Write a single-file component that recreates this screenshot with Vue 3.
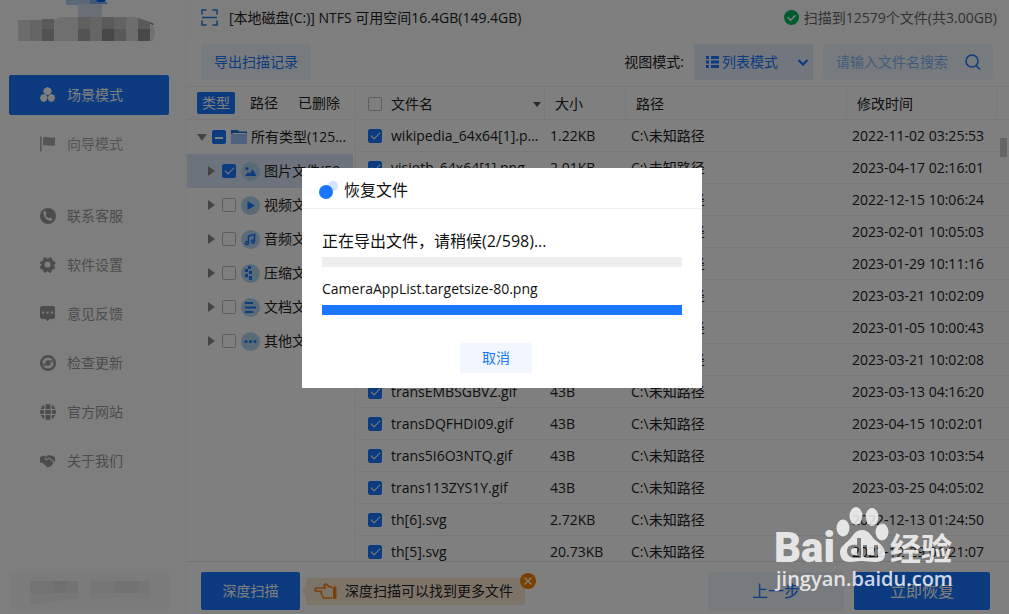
<script setup>
import { ref } from 'vue'

const primaryNav = [
  { label: '场景模式', icon: 'scene', active: true },
  { label: '向导模式', icon: 'flag' },
]
const secondaryNav = [
  { label: '联系客服', icon: 'phone' },
  { label: '软件设置', icon: 'gear' },
  { label: '意见反馈', icon: 'chat' },
  { label: '检查更新', icon: 'update' },
  { label: '官方网站', icon: 'globe' },
  { label: '关于我们', icon: 'hands' },
]
const tabs = ['类型', '路径', '已删除']
const tree = ref([
  { label: '图片文件(59...', icon: 'image', checked: true },
  { label: '视频文件', icon: 'video', checked: false },
  { label: '音频文件', icon: 'audio', checked: false },
  { label: '压缩文件', icon: 'zip', checked: false },
  { label: '文档文件', icon: 'doc', checked: false },
  { label: '其他文件', icon: 'other', checked: false },
])
const files = ref([
  { name: 'wikipedia_64x64[1].p...', size: '1.22KB', time: '2022-11-02 03:25:53' },
  { name: 'visioth_64x64[1].png', size: '2.01KB', time: '2023-04-17 02:16:01' },
  { name: '', size: '', time: '2022-12-15 10:06:24' },
  { name: '', size: '', time: '2023-02-01 10:05:03' },
  { name: '', size: '', time: '2023-01-29 10:11:16' },
  { name: '', size: '', time: '2023-03-21 10:02:09' },
  { name: '', size: '', time: '2023-01-05 10:00:43' },
  { name: '', size: '', time: '2023-03-21 10:02:08' },
  { name: 'transEMBSGBVZ.gif', size: '43B', time: '2023-03-13 04:16:20' },
  { name: 'transDQFHDI09.gif', size: '43B', time: '2023-04-15 10:02:01' },
  { name: 'trans5I6O3NTQ.gif', size: '43B', time: '2023-03-03 10:03:54' },
  { name: 'trans113ZYS1Y.gif', size: '43B', time: '2023-03-25 04:05:02' },
  { name: 'th[6].svg', size: '2.72KB', time: '2022-12-13 01:24:50' },
  { name: 'th[5].svg', size: '20.73KB', time: '2022-12-29 01:21:07' },
].map((f) => ({ ...f, checked: true })))
const allTypes = ref(true)
const allFiles = ref(false)
const keyword = ref('')
const viewMode = ref('list')
</script>

<template>
  <div class="app">
    <aside class="sidebar">
      <svg class="logo" width="160" height="44" viewBox="0 0 160 44" aria-hidden="true">
        <rect x="57" y="0" width="24" height="5" fill="#b9cfee" />
        <path d="M81 0h14l4 4H81z" fill="#80b0f0" />
        <path d="M87 0h10l-2 2h-6z" fill="#0863ea" />
        <rect x="69" y="4" width="24" height="13" fill="#d4ddee" />
        <rect x="9" y="20" width="24" height="21" fill="#d8d8d8" />
        <rect x="21" y="20" width="12" height="21" fill="#cacaca" />
        <rect x="33" y="19" width="12" height="22" fill="#b4b4b4" />
        <path d="M45 20l6-3h18v24H45z" fill="#dedede" />
        <rect x="69" y="17" width="12" height="24" fill="#c0c0c0" />
        <rect x="81" y="17" width="12" height="24" fill="#cacaca" />
        <rect x="93" y="17" width="12" height="24" fill="#b4b4b4" />
        <rect x="105" y="17" width="12" height="24" fill="#c6c6c6" />
        <path d="M117 17h9l3 1v23h-12z" fill="#dadada" />
        <path d="M129 18l12 4v19h-12z" fill="#b4b4b4" />
        <path d="M141 23q6 5 5 12l-2 6h-3z" fill="#e2e2e2" />
        <rect x="33" y="29" width="12" height="12" fill="#a4a4a4" />
        <rect x="69" y="29" width="12" height="12" fill="#a6a6a6" />
        <rect x="93" y="29" width="12" height="12" fill="#8e8e8e" />
        <rect x="105" y="29" width="12" height="12" fill="#b2b2b2" />
        <rect x="129" y="29" width="12" height="12" fill="#909090" />
        <path d="M141 22l4 2-1 1-3-2z" fill="#666" />
      </svg>
      <nav class="nav">
        <template v-for="(group, g) in [primaryNav, secondaryNav]" :key="g">
          <div class="nav-group">
            <a v-for="item in group" :key="item.label" href="#" class="nav-item" :class="{ active: item.active, strong: g === 1 }">
              <svg width="16" height="16" viewBox="0 0 16 16" fill="currentColor" aria-hidden="true">
                <g v-if="item.icon === 'scene'">
                  <path d="M7.5 0l3.300 1.400 1 3-1.500 2.900-2.800.8-2.800-.8-1.500-2.900 1-3zM3.700 7l3 1.300.9 2.800-1.500 3-2.400.9-2.500-1L0 11l1-2.800zM11.300 7l3 1.300.9 2.800-1.500 3-2.400.9-2.500-1-1.100-3 1-2.800z" />
                </g>
                <g v-else-if="item.icon === 'flag'">
                  <rect width="1.600" height="15" y="0.500" />
                  <path d="M3 1.500c4-1.500 6 1.200 12-.3v8c-5 2-8-1-12 .4z" />
                </g>
                <path v-else-if="item.icon === 'phone'" fill-rule="evenodd" d="M8 0a8 8 0 1 0 0 16A8 8 0 0 0 8 0zM4.400 3l1.300.5.8 2-1 1.200c.6 1.700 1.800 2.900 3.400 3.600l1.300-.9 1.900 1 .3 1.300c-.6 1-1.900 1.200-3.200.8C6 11.400 4 9 3.500 5.500c-.1-1.200.2-2 .9-2.500z" />
                <path v-else-if="item.icon === 'gear'" fill-rule="evenodd" d="M3.500.8L5.600.2l1.600 1.500h1L9.800.2l2.200.8.500 2.300.7.800 2 .7.200 2-1.400 1.100v1l1.300 1.200-.8 2-2 .5-.7.8-.5 2-1.700.5-1.500-1.300H7l-1.500 1.200-1.800-.5-.6-2-.8-.7-1.800-.6L0 9.800l1.300-1.400v-1L0 6.200l.5-1.700L2.600 4l.6-.7zM7.500 4.600a3 3 0 1 0 .1 6 3 3 0 0 0-.1-6z" />
                <path v-else-if="item.icon === 'chat'" fill-rule="evenodd" d="M1.500 0h12L15 1.500v10L13.500 13H9.600l-2.100 2.300L5.400 13H1.500L0 11.500v-10zM3 5.500h-1v2h2v-2zm3.500 0v2h2v-2zm4.500 0v2h2v-2z" />
                <g v-else-if="item.icon === 'update'" fill="none" stroke="currentColor">
                  <circle cx="8" cy="8" r="6.800" stroke-width="2.400" />
                  <circle cx="8" cy="8" r="2.700" fill="currentColor" stroke="none" />
                  <path d="M10.500 5l2.500 2.500M5.500 11L3 8.500" stroke-width="1.400" />
                </g>
                <g v-else-if="item.icon === 'globe'">
                  <circle cx="8" cy="8" r="8" />
                  <path d="M0 5.500h16M0 10.500h16M5.500 0Q3.500 8 5.500 16M10.500 0Q12.500 8 10.500 16" fill="none" class="cut" stroke-width="1.200" />
                </g>
                <g v-else>
                  <path d="M0 4l3.500-1.500L6 3.500 4.500 6l1.300 1.500L9 5.500l4.500 4.200-1.200 2-1 1.300-2 .8-1.500.6L3 10.300 0 9.500zM6.700 2.800L9.500 2l3 1L15 4v5.500L9.300 4.600 6 6.300 5.600 5.500z" />
                </g>
              </svg>
              <span>{{ item.label }}</span>
            </a>
          </div>
        </template>
      </nav>
      <div class="account">
        <svg width="130" height="25" viewBox="0 0 130 25" aria-hidden="true">
          <path d="M0 0h48v12H0z" fill="#e6e6e6" />
          <path d="M24 0h12v12H24z" fill="#dedede" />
          <path d="M0 12h48v5L12 23H0z" fill="#efefef" />
          <path d="M60 0h60v12H60z" fill="#ececec" />
          <path d="M84 0h24v12H84z" fill="#e4e4e4" />
          <path d="M60 12h60v5H60z" fill="#f2f2f2" />
        </svg>
      </div>
    </aside>

    <main class="main">
      <header class="top">
        <svg width="17" height="17" viewBox="0 0 17 17" fill="none" stroke="#2b7de9" stroke-width="1.500" aria-hidden="true">
          <path d="M1 5.500V1h4.500M11.500 1H16v4.500M16 11.500V16h-4.500M5.500 16H1v-4.500M1 8.500h15" />
        </svg>
        <span class="disk">[本地磁盘(C:)] NTFS 可用空间16.4GB(149.4GB)</span>
        <svg width="15" height="15" viewBox="0 0 15 15" aria-hidden="true">
          <circle cx="7.500" cy="7.500" r="7.500" fill="#00b85c" />
          <path d="M3.800 7.500l2.800 2.800 5-5" fill="none" stroke="#fff" stroke-width="1.500" />
        </svg>
        <span class="result">扫描到12579个文件(共3.00GB)</span>
      </header>

      <div class="toolbar">
        <button class="export" type="button">导出扫描记录</button>
        <label class="mode-label" for="mode">视图模式:</label>
        <div class="mode">
          <svg width="13" height="12" viewBox="0 0 13 12" fill="#1a76ff" aria-hidden="true">
            <path d="M0 0h3v3H0zM5 0h8v3H5zM0 4.500h3v3H0zM5 4.500h8v3H5zM0 9h3v3H0zM5 9h8v3H5z" />
          </svg>
          <select id="mode" v-model="viewMode">
            <option value="list">列表模式</option>
          </select>
          <svg width="10" height="7" viewBox="0 0 10 7" fill="none" stroke="#1a76ff" stroke-width="2" aria-hidden="true">
            <path d="M.5 1L5 5.500 9.500 1" />
          </svg>
        </div>
        <div class="search">
          <input v-model="keyword" type="text" placeholder="请输入文件名搜索" aria-label="请输入文件名搜索" />
          <button type="button" aria-label="搜索">
            <svg width="16" height="17" viewBox="0 0 16 17" fill="none" stroke="#1a76ff" stroke-width="1.600" aria-hidden="true">
              <circle cx="7" cy="7" r="6" />
              <path d="M11 11.500l4 4" />
            </svg>
          </button>
        </div>
      </div>

      <div class="content">
        <section class="types">
          <div class="tabs">
            <button v-for="(t, i) in tabs" :key="t" type="button" :class="{ on: i === 0 }">{{ t }}</button>
          </div>
          <div class="tree-row root">
            <svg width="10" height="7" viewBox="0 0 10 7" aria-hidden="true"><path d="M0 0h10L5 7z" fill="#888" /></svg>
            <input id="all" v-model="allTypes" type="checkbox" class="partial" />
            <svg class="folder" width="16" height="14" viewBox="0 0 16 14" aria-hidden="true">
              <path d="M0 0h7l1 1.500h8V5H0z" fill="#1a6fe0" />
              <path d="M1.500 3h14v2h-14z" fill="#fff" />
              <path d="M0 4h16v10H0z" fill="#9cc4fa" />
            </svg>
            <label for="all">所有类型(125...</label>
          </div>
          <div v-for="(n, i) in tree" :key="n.label" class="tree-row" :class="{ selected: i === 0 }">
            <svg width="7" height="10" viewBox="0 0 7 10" aria-hidden="true"><path d="M0 0l7 5-7 5z" fill="#888" /></svg>
            <input :id="n.icon" v-model="n.checked" type="checkbox" />
            <svg class="kind" width="19" height="19" viewBox="0 0 19 19" fill="#1a76ff" aria-hidden="true">
              <circle cx="9.500" cy="9.500" r="9.500" fill="#b5d7f0" />
              <g v-if="n.icon === 'image'"><path d="M4 14l3-4 2 1.700L11.500 7l4 7z" /><circle cx="6" cy="6.500" r="1.600" /></g>
              <path v-else-if="n.icon === 'video'" d="M6.500 5l7.500 4.500L6.500 14z" />
              <g v-else-if="n.icon === 'audio'" fill="none" stroke="#1a76ff" stroke-width="1.500">
                <path d="M7.500 13V6l6-1.500V11" />
                <circle cx="6" cy="13" r="1.500" /><circle cx="12" cy="11.500" r="1.500" />
              </g>
              <path v-else-if="n.icon === 'zip'" d="M7 2h3v3H7zM4 5h3v3H4zM8 7h3v3H8zM4 10h3v3H4zM8 12h3v4H8z" />
              <path v-else-if="n.icon === 'doc'" d="M4 4h8v2H4zM4 8.500h11v2H4zM4 13h8v2H4z" />
              <g v-else><circle cx="5" cy="9.500" r="1.500" /><circle cx="9.500" cy="9.500" r="1.500" /><circle cx="14" cy="9.500" r="1.500" /></g>
            </svg>
            <label :for="n.icon">{{ n.label }}</label>
          </div>
        </section>

        <section class="list">
          <table>
            <colgroup>
              <col class="c-name" /><col class="c-size" /><col /><col class="c-time" /><col class="c-end" />
            </colgroup>
            <thead>
              <tr>
                <th>
                  <div class="cell">
                    <input v-model="allFiles" type="checkbox" aria-label="文件名" />
                    <span>文件名</span>
                    <svg class="sort" width="8" height="5" viewBox="0 0 8 5" aria-hidden="true"><path d="M0 0h8L4 5z" fill="#555" /></svg>
                  </div>
                </th>
                <th>大小</th>
                <th>路径</th>
                <th>修改时间</th>
                <th></th>
              </tr>
            </thead>
            <tbody>
              <tr v-for="(f, i) in files" :key="i">
                <td>
                  <div class="cell">
                    <input v-model="f.checked" type="checkbox" :aria-label="f.name" />
                    <span>{{ f.name }}</span>
                  </div>
                </td>
                <td>{{ f.size }}</td>
                <td>C:\未知路径</td>
                <td colspan="2">{{ f.time }}</td>
              </tr>
            </tbody>
          </table>
          <div class="thumb"></div>
        </section>
      </div>

      <footer class="foot">
        <button class="solid deep" type="button">深度扫描</button>
        <div class="tip">
          <svg width="23" height="17" viewBox="0 0 23 17" fill="none" stroke="#f57f10" stroke-width="1.600" stroke-linejoin="round" aria-hidden="true">
            <path d="M18.500 4.500L15 3.500 11.500 1 10 2.300 11.500 5H2.300C.5 5.200.5 8 2.300 8.200H7.500l-.3 2 1 2.300 1.300 2.500h9" />
            <path d="M19.500 4h2.500v11.500h-2.500z" fill="#f57f10" stroke-width="1" />
          </svg>
          <span>深度扫描可以找到更多文件</span>
          <button class="close" type="button" aria-label="关闭">
            <svg width="16" height="16" viewBox="0 0 16 16" aria-hidden="true">
              <circle cx="8" cy="8" r="8" fill="#f58000" />
              <path d="M4.500 4.500l7 7M11.500 4.500l-7 7" stroke="#fff" stroke-width="1.300" />
            </svg>
          </button>
        </div>
        <button class="prev" type="button">上一步</button>
        <button class="solid go" type="button">立即恢复</button>
      </footer>
    </main>

    <div class="mask">
      <div class="dialog" role="dialog" aria-labelledby="dialog-title">
        <div class="dialog-head">
          <svg width="20" height="20" viewBox="0 0 20 20" aria-hidden="true">
            <circle cx="14" cy="6" r="5" fill="#d3e4ff" />
            <circle cx="7" cy="12" r="7" fill="#1a76ff" />
          </svg>
          <h1 id="dialog-title">恢复文件</h1>
        </div>
        <div class="dialog-body">
          <label class="state" for="total">正在导出文件，请稍候(2/598)...</label>
          <progress id="total" value="0" max="598"></progress>
          <label class="file" for="current">CameraAppList.targetsize-80.png</label>
          <progress id="current" value="100" max="100"></progress>
          <button class="cancel" type="button">取消</button>
        </div>
      </div>
    </div>

    <svg class="watermark" width="184" height="90" viewBox="0 0 184 90" fill="#fff" role="img" aria-label="Baidu 经验">
      <text x="0" y="56" class="wm-latin">Bai</text>
      <ellipse cx="69" cy="22" rx="6.500" ry="8.500" />
      <ellipse cx="82" cy="10" rx="6.500" ry="9" />
      <ellipse cx="98" cy="11" rx="6.500" ry="9" />
      <ellipse cx="108" cy="26" rx="6.500" ry="8.500" />
      <path fill-rule="evenodd" d="M88 24c7 0 9 6 13 10 6 4 10 8 10 14 0 7-5 8-11 8-5 0-8-1-12-1s-7 1-12 1c-6 0-10-3-10-10 0-5 5-8 9-12s6-10 13-10zM83 32v7c-7-1-10 2-10 6s3 7 8 7h6V32zm0 10v7h-3c-4 0-4-7 0-7zM89 39v9c0 3 2 4 5 4h10V39h-4v10h-5c-2 0-2-1-2-2v-8z" />
      <text x="116" y="54" class="wm-cjk">经验</text>
      <text x="2" y="80" class="wm-url">jingyan.baidu.com</text>
    </svg>
  </div>
</template>

<style>
body { margin: 0; }
</style>

<style scoped>
* { box-sizing: border-box; }
.app {
  position: relative;
  display: flex;
  height: 100vh;
  overflow: hidden;
  background: #fff;
  color: #222;
  font: 14px/20px "Open Sans", "Noto Sans CJK SC", sans-serif;
}
button, input, select { font: inherit; color: inherit; margin: 0; padding: 0; border: 0; }
button { cursor: pointer; border-radius: 2px; background: none; white-space: nowrap; }
svg { display: block; flex: none; }

.sidebar {
  display: flex;
  flex-direction: column;
  flex: none;
  width: 187px;
  padding: 0 17px 5px 9px;
  border-right: 1px solid #f8f8f8;
  background: #fdfdfd;
}
.nav { flex: 1; padding-top: 31px; }
.nav-group { display: flex; flex-direction: column; gap: 9px; margin-bottom: 32px; }
.nav-item {
  display: flex;
  align-items: center;
  gap: 11px;
  width: 160px;
  height: 40px;
  padding-left: 31px;
  border-radius: 2px;
  color: #aaa;
  text-decoration: none;
}
.nav-item.strong { color: #999; }
.nav-item.active { background: #1a76ff; color: #fff; }
.cut { stroke: #fdfdfd; }
.account { display: flex; width: 160px; height: 37px; padding: 9px 0 0 21px; background: #f6f6f6; }

.main { display: flex; flex: 1; flex-direction: column; min-width: 0; }
.top { display: flex; align-items: center; height: 38px; padding: 0 12px 3px 14px; background: #fcfcfc; }
.disk { flex: 1; margin-left: 11px; }
.result { margin-left: 5px; color: #666; }

.toolbar { display: flex; align-items: center; height: 49px; padding: 0 16px 0 14px; border-bottom: 1px solid #f0f0f0; }
.export { width: 110px; height: 36px; background: #f1f7fd; color: #1a76ff; }
.mode-label { margin-left: auto; }
.mode { display: flex; align-items: center; width: 119px; height: 36px; margin: 0 10px; padding: 0 5px 0 12px; background: #e4ecfb; }
.mode select { flex: 1; min-width: 0; margin-left: 3px; appearance: none; background: none; color: #1a76ff; }
.search { display: flex; align-items: center; width: 170px; height: 36px; padding: 0 12px 0 13px; border-radius: 2px; background: #f1f7fd; }
.search input { flex: 1; min-width: 0; background: none; outline: 0; }
.search input::placeholder { color: #84b4f4; opacity: 1; }

.content { display: flex; flex: 1; min-height: 0; border-bottom: 1px solid #e6e6e6; }
.types { flex: none; width: 169px; padding-right: 2px; border-right: 1px solid #f0f0f0; }
.tabs { display: flex; align-items: center; gap: 10px; height: 33px; padding: 0 10px; border-bottom: 1px solid #f0f0f0; }
.tabs button { flex: none; height: 22px; padding: 0 5px; }
.tabs .on { background: #1a76ff; color: #fff; }
.tree-row { display: flex; align-items: center; height: 34px; padding: 0 3px 0 21px; }
.tree-row.root { padding-left: 10px; }
.tree-row.selected { background: #dbe7f8; }
.tree-row input { margin-left: 7px; }
.tree-row.root input { margin-left: 5px; }
.tree-row label { flex: 1; min-width: 0; margin-left: 4px; white-space: nowrap; }
.kind, .folder { margin-left: 5px; }

input[type="checkbox"] {
  display: grid;
  flex: none;
  place-items: center;
  width: 14px;
  height: 14px;
  appearance: none;
  border: 1px solid #bbb;
  border-radius: 2px;
  background: #fff;
}
input[type="checkbox"]:checked { border-color: #1a76ff; background: #1a76ff; }
input[type="checkbox"]:checked::before {
  content: "";
  width: 8px;
  height: 4px;
  margin-bottom: 3px;
  border: solid #fff;
  border-width: 0 0 1px 1px;
  transform: rotate(-45deg);
}
input.partial:checked::before { height: 2px; margin: 0; border-width: 0 0 2px; transform: none; }

.list { position: relative; flex: 1; min-width: 0; padding-left: 2px; overflow: hidden; }
table { width: 100%; border-collapse: separate; border-spacing: 0; table-layout: fixed; }
.c-name { width: 187px; }
.c-size { width: 81px; }
.c-time { width: 150px; }
.c-end { width: 12px; }
th, td { padding: 0 0 0 5px; border-bottom: 1px solid #f0f0f0; text-align: left; white-space: nowrap; }
th { height: 33px; padding: 2px 0 0 10px; border-right: 1px solid #f0f0f0; font-weight: 400; }
th:last-child { border-right: 0; padding: 0; }
td { height: 32px; }
th:first-child, td:first-child { padding-left: 10px; }
.cell { display: flex; align-items: center; gap: 9px; }
.sort { margin: 0 3px 0 auto; }
.thumb { position: absolute; top: 51px; right: 2px; width: 7px; height: 19px; background: #ccc; }

.foot { display: flex; align-items: center; flex: none; height: 52px; padding: 6px 19px 0 14px; }
.solid { background: #1a76ff; color: #fff; }
.deep { width: 99px; height: 38px; }
.tip { position: relative; display: flex; align-items: center; gap: 8px; height: 27px; margin-left: 6px; padding: 0 12px 0 8px; border-radius: 2px; background: #fbe8d2; }
.tip::before { content: ""; position: absolute; left: -5px; top: 8px; border: 5px solid transparent; border-left: 0; border-right-color: #fbe8d2; }
.close { position: absolute; top: -5px; right: -11px; }
.prev, .go { width: 136px; height: 38px; font-size: 16px; }
.prev { margin: 0 10px 0 auto; background: #f1f7fd; color: #1a76ff; }

.mask { position: absolute; inset: 0; display: flex; align-items: flex-start; justify-content: center; padding: 168px 5px 0 0; background: rgba(0, 0, 0, 0.5); }
.dialog { width: 400px; background: #fff; color: #111; }
.dialog-head { display: flex; align-items: center; gap: 5px; height: 41px; padding: 4px 17px 0; border-bottom: 1px solid #f0f0f0; }
h1 { margin: 0; font-size: 16px; font-weight: 400; line-height: 24px; }
.dialog-body { display: flex; flex-direction: column; padding: 20px 20px 15px; }
.state { font-size: 16px; line-height: 24px; margin-bottom: 4px; }
.file { margin: 12px 0 6px; }
progress { width: 100%; height: 10px; appearance: none; border: 0; background: #eee; }
progress::-webkit-progress-bar { background: #eee; }
progress::-webkit-progress-value { background: #1a76ff; }
.cancel { align-self: center; width: 72px; height: 30px; margin: 28px 12px 0 0; background: #f2f7ff; color: #1a76ff; }

.watermark { position: absolute; right: 51px; bottom: 18px; opacity: 0.8; pointer-events: none; }
.wm-latin { font: 900 42px Roboto, sans-serif; }
.wm-cjk { font: 700 31px "Noto Sans CJK SC", sans-serif; }
.wm-url { font: 600 20px "Open Sans", sans-serif; }
</style>
